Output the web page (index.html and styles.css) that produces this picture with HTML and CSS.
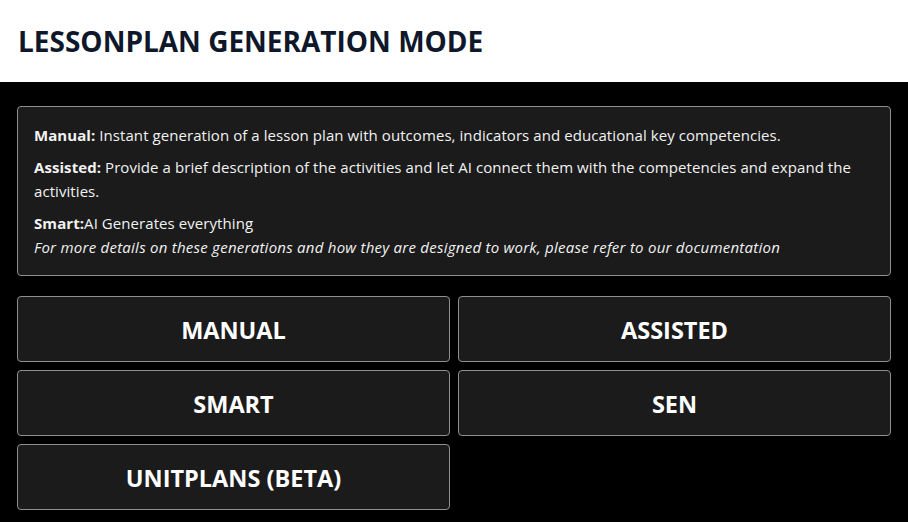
FILE: index.html
```html
<!DOCTYPE html>
<html lang="en">
<head>
<meta charset="utf-8">
<title>Lessonplan Generation Mode</title>
<link rel="stylesheet" href="styles.css">
</head>
<body>
<header class="header">
  <h1 class="title">LESSONPLAN GENERATION MODE</h1>
</header>
<main class="content">
  <section class="info">
    <p class="info-p"><strong>Manual:</strong> Instant generation of a lesson plan with outcomes, indicators and educational key competencies.</p>
    <p class="info-p"><strong>Assisted:</strong> Provide a brief description of the activities and let AI connect them with the competencies and expand the activities.</p>
    <p class="info-p"><strong>Smart:</strong>AI Generates everything<br><em class="note">For more details on these generations and how they are designed to work, please refer to our documentation</em></p>
  </section>
  <div class="modes">
    <button class="mode">MANUAL</button>
    <button class="mode">ASSISTED</button>
    <button class="mode">SMART</button>
    <button class="mode">SEN</button>
    <button class="mode">UNITPLANS (BETA)</button>
  </div>
</main>
</body>
</html>
```

FILE: styles.css
```css
* { box-sizing: border-box; }
html, body { margin: 0; padding: 0; }
body {
  background: #000;
  font-family: "Open Sans", "Noto Sans", sans-serif;
  color: #f2f2f2;
  height: 522px;
  overflow: hidden;
}
.header {
  background: #fff;
  height: 82px;
  display: flex;
  align-items: center;
  padding: 0 18px;
}
.title {
  margin: 0;
  font-size: 28px;
  font-weight: 700;
  color: #0f172a;
}
.content {
  padding: 24px 17px 0;
}
.info {
  background: #1b1b1b;
  border: 1px solid #8f8f8f;
  border-radius: 4px;
  padding: 16px;
  font-size: 15px;
  line-height: 24px;
  letter-spacing: 0.07px;
}
.info-p { margin: 0 0 8px; }
.info-p:last-child { margin-bottom: 0; }
.note { letter-spacing: 0.25px; }
.modes {
  margin-top: 20px;
  display: grid;
  grid-template-columns: 1fr 1fr;
  gap: 8px;
}
.mode {
  height: 66px;
  background: #1b1b1b;
  border: 1px solid #8f8f8f;
  border-radius: 4px;
  color: #fff;
  font-family: "Open Sans", "Noto Sans", sans-serif;
  font-size: 23.5px;
  font-weight: 700;
  padding: 2px 0 0;
  cursor: pointer;
}
```
